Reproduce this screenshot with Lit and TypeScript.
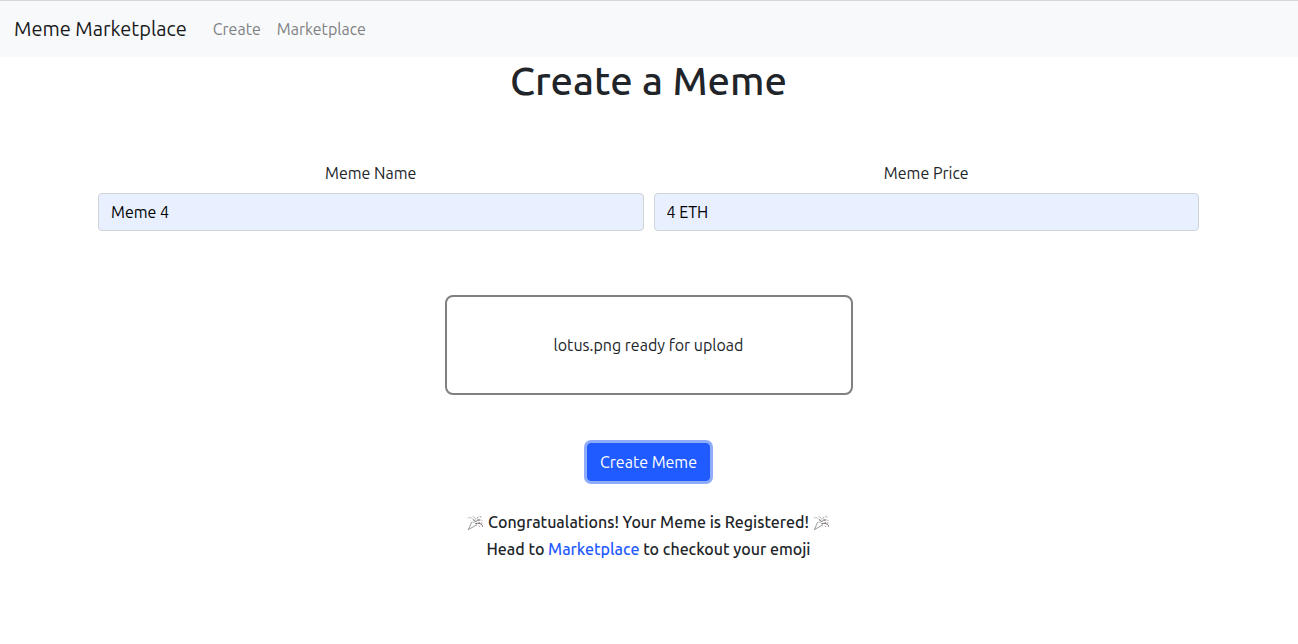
import { LitElement, html, css } from "lit";
import { customElement, property, state } from "lit/decorators.js";

@customElement("party-popper")
export class PartyPopper extends LitElement {
  static styles = css`
    :host {
      display: inline-block;
      width: 17px;
      height: 16px;
      vertical-align: -3px;
    }
    svg {
      display: block;
      width: 100%;
      height: 100%;
    }
  `;

  render() {
    return html`
      <svg viewBox="0 0 32 32" fill="none" stroke="#6c6f73" stroke-width="1.4" stroke-linecap="round" stroke-linejoin="round" aria-hidden="true">
        <path d="M2 29 8 15M2 29 18 20" stroke="#85817f" stroke-width="1.6" />
        <path d="M8 15c2-3 10 1 10 5" stroke="#a5a6a8" />
        <path d="M1 6c4-2 8-1 11 4M11 3c4 1 6 4 4 8" stroke="#a8a4a8" />
        <path d="M12 10c2 1 3 2 4 4 3-4 6-5 9-4M17 17c4-1 8-1 12 3" stroke-width="2" />
        <path d="M19 6l2-1M25 3l2 1M21 10l2 1M28 10l1 1M23 15l2 1M28 16l1 0M23 22l1 1M30 21v2" stroke="#a08c8a" stroke-width="2" />
      </svg>
    `;
  }
}

@customElement("app-root")
export class AppRoot extends LitElement {
  static styles = css`
    :host {
      display: block;
      font-family: Ubuntu, "Noto Sans", sans-serif;
      font-size: 16px;
      line-height: 24px;
      color: #212529;
    }
    *,
    *::before,
    *::after {
      box-sizing: border-box;
    }
    a {
      color: #1f5bff;
      text-decoration: none;
    }
    .navbar {
      display: flex;
      align-items: center;
      gap: 18px;
      padding: 8px 14px;
      border-top: 1px solid #d5d7d9;
      background: #f8f9fb;
    }
    .brand {
      font-size: 20px;
      line-height: 30px;
      color: #18191a;
    }
    .links {
      display: flex;
    }
    .link {
      padding: 8px;
      color: #808182;
    }
    main {
      display: flex;
      flex-direction: column;
      align-items: center;
      padding: 0 99px 0 98px;
      text-align: center;
    }
    h1 {
      margin: 0;
      font-size: 40px;
      line-height: 48px;
      font-weight: 500;
    }
    form {
      display: flex;
      flex-direction: column;
      align-items: center;
      align-self: stretch;
      margin-top: 56px;
    }
    .fields {
      display: grid;
      grid-template-columns: 1fr 1fr;
      gap: 10px;
      align-self: stretch;
    }
    .field {
      display: flex;
      flex-direction: column;
      gap: 8px;
    }
    input {
      width: 100%;
      height: 38px;
      padding: 6px 12px;
      border: 1px solid #ced4da;
      border-radius: 4px;
      background: #e8efff;
      color: #000;
      font: inherit;
    }
    .dropzone {
      width: 408px;
      max-width: 100%;
      margin-top: 64px;
      padding: 36px;
      border: 2px solid #808080;
      border-radius: 8px;
    }
    .submit {
      margin-top: 48px;
      padding: 6px 12px;
      border: 1px solid #1f5bff;
      border-radius: 4px;
      background: #1f5bff;
      box-shadow: 0 0 0 3px #8facfc;
      color: #fff;
      font: inherit;
      cursor: pointer;
    }
    .message {
      margin: 28px 0 0;
      font-weight: 500;
      line-height: 27px;
    }
  `;

  @property() fileName = "lotus.png";
  @state() private memeName = "Meme 4";
  @state() private memePrice = "4 ETH";

  render() {
    return html`
      <nav class="navbar">
        <a class="brand" href="#">Meme Marketplace</a>
        <div class="links">
          <a class="link" href="#create">Create</a>
          <a class="link" href="#marketplace">Marketplace</a>
        </div>
      </nav>
      <main>
        <h1>Create a Meme</h1>
        <form @submit=${(e: Event) => e.preventDefault()}>
          <div class="fields">
            <div class="field">
              <label for="name">Meme Name</label>
              <input id="name" type="text" .value=${this.memeName} />
            </div>
            <div class="field">
              <label for="price">Meme Price</label>
              <input id="price" type="text" .value=${this.memePrice} />
            </div>
          </div>
          <div class="dropzone">${this.fileName} ready for upload</div>
          <button class="submit" type="submit">Create Meme</button>
        </form>
        <p class="message">
          <party-popper></party-popper> Congratualations! Your Meme is Registered! <party-popper></party-popper><br />
          Head to <a href="#marketplace">Marketplace</a> to checkout your emoji
        </p>
      </main>
    `;
  }
}
